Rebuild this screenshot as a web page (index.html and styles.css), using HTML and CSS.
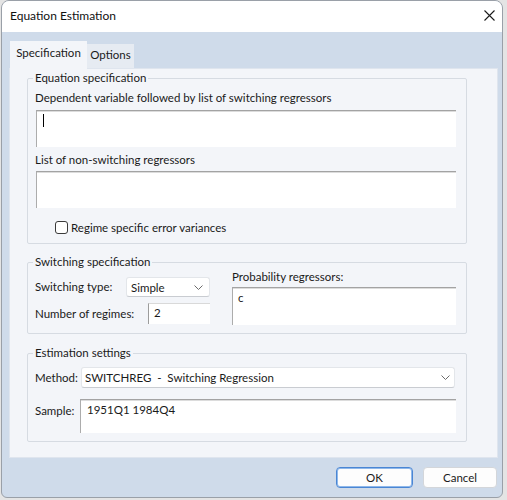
FILE: index.html
```html
<!DOCTYPE html>
<html>
<head>
<meta charset="utf-8">
<link rel="stylesheet" href="styles.css">
</head>
<body>
<div class="window">
  <div class="titlebar">
    <span class="title">Equation Estimation</span>
    <svg class="close" width="11" height="11" viewBox="0 0 11 11"><path d="M0.5 0.5 L10.5 10.5 M10.5 0.5 L0.5 10.5" stroke="#1a1a1a" stroke-width="1.1" fill="none"/></svg>
  </div>
  <div class="client">
    <div class="tabs">
      <div class="tab active">Specification</div>
      <div class="tab">Options</div>
    </div>
    <div class="panel">
      <fieldset class="group g1">
        <legend>Equation specification</legend>
        <div class="label l1">Dependent variable followed by list of switching regressors</div>
        <div class="textbox tall"><span class="caret"></span></div>
        <div class="label l2">List of non-switching regressors</div>
        <div class="textbox tall"></div>
        <div class="check"><span class="box"></span><span>Regime specific error variances</span></div>
      </fieldset>
      <fieldset class="group g2">
        <legend>Switching specification</legend>
        <div class="cols">
          <div class="leftcol">
            <div class="row r1">
              <span class="label">Switching type:</span>
              <div class="select small"><span>Simple</span><svg class="chev" width="9" height="5" viewBox="0 0 9 5"><path d="M0.5 0.5 L4.5 4.5 L8.5 0.5" stroke="#6b6b6b" fill="none"/></svg></div>
            </div>
            <div class="row r2">
              <span class="label">Number of regimes:</span>
              <div class="numbox">2</div>
            </div>
          </div>
          <div class="rightcol">
            <div class="label plabel">Probability regressors:</div>
            <div class="textbox prob">c</div>
          </div>
        </div>
      </fieldset>
      <fieldset class="group g3">
        <legend>Estimation settings</legend>
        <div class="row mrow">
          <span class="label">Method:</span>
          <div class="select wide"><span>SWITCHREG&nbsp; -&nbsp; Switching Regression</span><svg class="chev" width="9" height="5" viewBox="0 0 9 5"><path d="M0.5 0.5 L4.5 4.5 L8.5 0.5" stroke="#6b6b6b" fill="none"/></svg></div>
        </div>
        <div class="row srow">
          <span class="label slabel">Sample:</span>
          <div class="textbox sample">1951Q1 1984Q4</div>
        </div>
      </fieldset>
    </div>
    <div class="buttons">
      <div class="btn default">OK</div>
      <div class="btn">Cancel</div>
    </div>
  </div>
</div>
</body>
</html>
```
FILE: styles.css
```css
* { box-sizing: border-box; }
html, body { margin: 0; padding: 0; }
body {
  width: 507px;
  height: 500px;
  overflow: hidden;
  background: #e4e4e4;
  font-family: Lato, "Liberation Sans", sans-serif;
  font-size: 11.5px;
  color: #1a1a1a;
}
.window {
  margin-left: 1px;
  width: 502px;
  height: 498px;
  border: 1px solid #9aa0a8;
  border-radius: 8px 8px 6px 6px;
  overflow: hidden;
  display: flex;
  flex-direction: column;
  background: #cfdbea;
}
.titlebar {
  height: 31px;
  flex: none;
  background: #fff;
  display: flex;
  align-items: center;
  justify-content: space-between;
  padding: 0 7px 2px 8px;
}
.title { font-size: 12px; color: #111; }
.client {
  flex: 1;
  display: flex;
  flex-direction: column;
  padding: 9px 4px 0 7px;
}
.tabs {
  display: flex;
  align-items: flex-end;
  padding-left: 1px;
  height: 27px;
  position: relative;
  z-index: 1;
}
.tab {
  height: 24px;
  width: 47px;
  background: #e6ebf2;
  display: flex;
  align-items: center;
  justify-content: center;
  padding-bottom: 4px;
}
.tab.active {
  width: 77px;
  height: 28px;
  margin-bottom: -1px;
  background: #f3f5f9;
  padding-bottom: 6px;
}
.panel {
  background: #f3f5f9;
  border: 1px solid #dfe5ee;
  padding: 1px 0 15px 17px;
}
.group {
  margin: 0;
  width: 440px;
  border: 1px solid #d6dbe2;
  border-radius: 2px;
  padding: 4px 10px 8px 7px;
  min-width: 0;
}
.group legend {
  padding: 0 2px;
  margin-left: -2px;
  line-height: 16px;
}
.label { line-height: 16px; white-space: nowrap; }
.textbox {
  background: #fff;
  border-top: 1px solid #a3a3a3;
  border-left: 1px solid #acacac;
  box-shadow: inset 0 1px 0 #dcdcdc;
}
.textbox.tall { height: 37px; margin-left: 1px; margin-top: 4px; }
.textbox.tall + .label { margin-top: 5px; }
.l2 + .textbox.tall { margin-top: 3px; }
.caret {
  display: block;
  width: 1px;
  height: 13px;
  background: #000;
  margin: 3px 0 0 6px;
}
.check {
  display: flex;
  align-items: center;
  margin: 11px 0 0 20px;
  height: 16px;
}
.box {
  width: 13px;
  height: 13px;
  border: 1px solid #3a3a3a;
  border-radius: 3px;
  background: #fff;
  margin-right: 3px;
}
.g2 { margin-top: 10px; padding-top: 0; }
.cols { display: flex; gap: 22px; }
.leftcol { width: 175px; padding-top: 7px; }
.row { display: flex; align-items: center; justify-content: space-between; }
.r2 { margin-top: 6px; }
.select {
  background: #fff;
  border: 1px solid #e3e6ea;
  border-bottom-color: #c9ccd1;
  border-radius: 3px;
  display: flex;
  align-items: center;
  justify-content: space-between;
  padding: 0 6px 0 4px;
}
.select.small { width: 84px; height: 20px; }
.numbox {
  width: 62px;
  height: 21px;
  background: #fff;
  border-left: 1px solid #9c9c9c;
  border-top: 1px solid #d9d9d9;
  padding: 2px 0 0 5px;
}
.rightcol { width: 224px; }
.plabel { line-height: 14px; }
.textbox.prob { height: 38px; margin-top: 3px; padding: 3px 0 0 5px; }
.g3 { margin-top: 11px; padding-top: 6px; }
.mrow { justify-content: flex-start; }
.mrow .label { width: 46px; }
.select.wide { width: 374px; height: 21px; padding-right: 4px; padding-left: 3px; }
.srow { margin-top: 11px; align-items: flex-start; justify-content: flex-start; }
.slabel { width: 45px; margin-top: 4px; }
.textbox.sample { width: 376px; height: 34px; padding: 3px 0 0 6px; }
.buttons {
  display: flex;
  justify-content: flex-end;
  gap: 10px;
  margin-top: 9px;
  padding-right: 1px;
}
.btn {
  height: 21px;
  width: 74px;
  background: #fdfdfd;
  border: 1px solid #d3d6da;
  border-radius: 4px;
  display: flex;
  align-items: center;
  justify-content: center;
}
.btn.default {
  width: 77px;
  border: 1px solid #4a86d4;
  box-shadow: inset 0 0 0 1px #8fb8ea;
}
```
